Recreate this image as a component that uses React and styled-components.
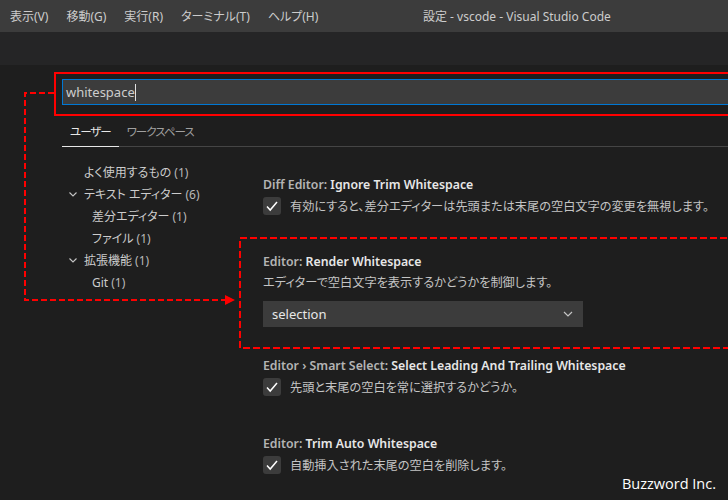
import React from 'react';
import styled, { createGlobalStyle } from 'styled-components';

const GlobalStyle = createGlobalStyle`
  html, body {
    margin: 0;
    padding: 0;
    background: #1e1e1e;
    overflow: hidden;
  }
  body {
    font-family: "Noto Sans", "Noto Sans CJK JP", sans-serif;
    font-feature-settings: "palt";
  }
`;

const Window = styled.div`
  position: relative;
  width: 728px;
  height: 500px;
  overflow: hidden;
  background: #1e1e1e;
`;

const TitleBar = styled.div`
  height: 32px;
  background: #3c3c3c;
  display: flex;
  align-items: center;
  color: #cccccc;
  font-size: 12px;
`;

const Menu = styled.div`
  display: flex;
  gap: 18px;
  padding-left: 10px;
  width: 413px;
`;

const MenuItem = styled.span`
  white-space: nowrap;
`;

const Title = styled.div`
  white-space: nowrap;
`;

const TabBand = styled.div`
  height: 33px;
  background: #252526;
`;

const Body = styled.div`
  padding: 7px 0 0 54px;
  width: 900px;
`;

const SearchFrame = styled.div`
  border: 2px solid #ff0000;
  padding: 5px 0 9px 6px;
`;

const SearchInput = styled.div`
  height: 24px;
  border: 1px solid #0078d4;
  border-right: none;
  background: #3c3c3c;
  display: flex;
  align-items: center;
  padding-left: 3px;
  color: #cccccc;
  font-size: 13px;
`;

const Caret = styled.span`
  display: inline-block;
  width: 1px;
  height: 17px;
  background: #e0e0e0;
`;

const Tabs = styled.div`
  display: flex;
  margin-left: 8px;
  border-bottom: 1px solid #454545;
`;

const Tab = styled.div`
  padding: 0 8px;
  height: 30px;
  display: flex;
  align-items: center;
  font-size: 11.5px;
  letter-spacing: -1px;
  color: ${p => (p.$active ? '#e7e7e7' : '#a0a0a0')};
  margin-bottom: -1px;
  border-bottom: 1px solid ${p => (p.$active ? '#e7e7e7' : 'transparent')};
`;

const Content = styled.div`
  display: flex;
  margin-left: 8px;
`;

const Toc = styled.div`
  width: 177px;
  padding-top: 14px;
  display: flex;
  flex-direction: column;
`;

const TocItem = styled.div`
  height: 22px;
  display: flex;
  align-items: center;
  padding-left: ${p => p.$indent}px;
  font-size: 12px;
  color: #cccccc;
  white-space: nowrap;
`;

const Chevron = styled.svg`
  width: 10px;
  height: 10px;
  margin-right: 6px;
`;

const Count = styled.span`
  color: #b8b8b8;
  margin-left: 3px;
  font-family: "Noto Sans", sans-serif;
`;

const SettingsList = styled.div`
  flex: 1;
`;

const Setting = styled.div`
  padding: ${p => p.$top}px 0 22px 24px;
`;

const Highlight = styled.div`
  position: relative;
`;

const DashBox = styled.svg`
  position: absolute;
  left: 0;
  top: 0;
  width: 100%;
  height: 100%;
  overflow: visible;
  pointer-events: none;
`;

const SettingTitle = styled.div`
  height: 18px;
  line-height: 18px;
  font-size: 12.3px;
  font-weight: 600;
  color: #e7e7e7;
  white-space: nowrap;
`;

const Category = styled.span`
  color: #b4b4b4;
`;

const Description = styled.div`
  margin-top: 3px;
  height: 18px;
  line-height: 18px;
  font-size: 12.2px;
  color: #c4c4c4;
  white-space: nowrap;
`;

const CheckRow = styled.div`
  margin-top: 3px;
  display: flex;
  align-items: center;
  gap: 9px;
  font-size: 12.2px;
  color: #c4c4c4;
  white-space: nowrap;
`;

const Checkbox = styled.div`
  width: 18px;
  height: 18px;
  border-radius: 3px;
  background: #3c3c3c;
  display: flex;
  align-items: center;
  justify-content: center;
`;

const Select = styled.div`
  margin-top: 9px;
  width: 320px;
  height: 26px;
  background: #3c3c3c;
  display: flex;
  align-items: center;
  justify-content: space-between;
  padding: 0 9px;
  box-sizing: border-box;
  font-size: 13px;
  color: #e7e7e7;
`;

const Connector = styled.svg`
  position: absolute;
  left: 0;
  top: 0;
  pointer-events: none;
`;

const Watermark = styled.div`
  position: absolute;
  right: 12px;
  bottom: 7px;
  color: #ffffff;
  font-size: 14.5px;
  font-family: "Open Sans", "Noto Sans", sans-serif;
`;

const menu = ['表示(V)', '移動(G)', '実行(R)', 'ターミナル(T)', 'ヘルプ(H)'];

const toc = [
  { label: 'よく使用するもの', count: 1, indent: 22 },
  { label: 'テキスト エディター', count: 6, indent: 6, open: true },
  { label: '差分エディター', count: 1, indent: 30 },
  { label: 'ファイル', count: 1, indent: 30 },
  { label: '拡張機能', count: 1, indent: 6, open: true },
  { label: 'Git', count: 1, indent: 30 },
];

const Down = () => (
  <Chevron viewBox="0 0 10 10">
    <path d="M1.5 3.5 L5 7 L8.5 3.5" fill="none" stroke="#c5c5c5" strokeWidth="1.1" />
  </Chevron>
);

const Check = () => (
  <Checkbox>
    <svg width="14" height="14" viewBox="0 0 14 14">
      <path d="M2 7.5 L5.2 11 L12 3" fill="none" stroke="#ffffff" strokeWidth="1.5" />
    </svg>
  </Checkbox>
);

const App = () => (
  <Window>
    <GlobalStyle />
    <TitleBar>
      <Menu>
        {menu.map(m => (
          <MenuItem key={m}>{m}</MenuItem>
        ))}
      </Menu>
      <Title>設定 - vscode - Visual Studio Code</Title>
    </TitleBar>
    <TabBand />
    <Body>
      <SearchFrame>
        <SearchInput>
          whitespace
          <Caret />
        </SearchInput>
      </SearchFrame>
      <Tabs>
        <Tab $active>ユーザー</Tab>
        <Tab>ワークスペース</Tab>
      </Tabs>
      <Content>
        <Toc>
          {toc.map(t => (
            <TocItem key={t.label} $indent={t.indent}>
              {t.open && <Down />}
              {t.label}
              <Count>({t.count})</Count>
            </TocItem>
          ))}
        </Toc>
        <SettingsList>
          <Setting $top={29}>
            <SettingTitle>
              <Category>Diff Editor: </Category>Ignore Trim Whitespace
            </SettingTitle>
            <CheckRow>
              <Check />
              有効にすると、差分エディターは先頭または末尾の空白文字の変更を無視します。
            </CheckRow>
          </Setting>
          <Highlight>
            <DashBox>
              <rect x="1" y="1" width="600" height="110" fill="none" stroke="#ff0000" strokeWidth="2" strokeDasharray="7 3" />
            </DashBox>
            <Setting $top={16}>
              <SettingTitle>
                <Category>Editor: </Category>Render Whitespace
              </SettingTitle>
              <Description>エディターで空白文字を表示するかどうかを制御します。</Description>
              <Select>
                selection
                <svg width="12" height="12" viewBox="0 0 12 12">
                  <path d="M2 4 L6 8 L10 4" fill="none" stroke="#c5c5c5" strokeWidth="1.2" />
                </svg>
              </Select>
            </Setting>
          </Highlight>
          <Setting $top={8}>
            <SettingTitle>
              <Category>Editor › Smart Select: </Category>Select Leading And Trailing Whitespace
            </SettingTitle>
            <CheckRow>
              <Check />
              先頭と末尾の空白を常に選択するかどうか。
            </CheckRow>
          </Setting>
          <Setting $top={17}>
            <SettingTitle>
              <Category>Editor: </Category>Trim Auto Whitespace
            </SettingTitle>
            <CheckRow>
              <Check />
              自動挿入された末尾の空白を削除します。
            </CheckRow>
          </Setting>
        </SettingsList>
      </Content>
    </Body>
    <Connector width="728" height="500">
      <path d="M54 93 H25 V300 H228" fill="none" stroke="#ff0000" strokeWidth="2" strokeDasharray="6 3" />
      <polygon points="225,295 235,300 225,305" fill="#ff0000" />
    </Connector>
    <Watermark>Buzzword Inc.</Watermark>
  </Window>
);

export default App;
